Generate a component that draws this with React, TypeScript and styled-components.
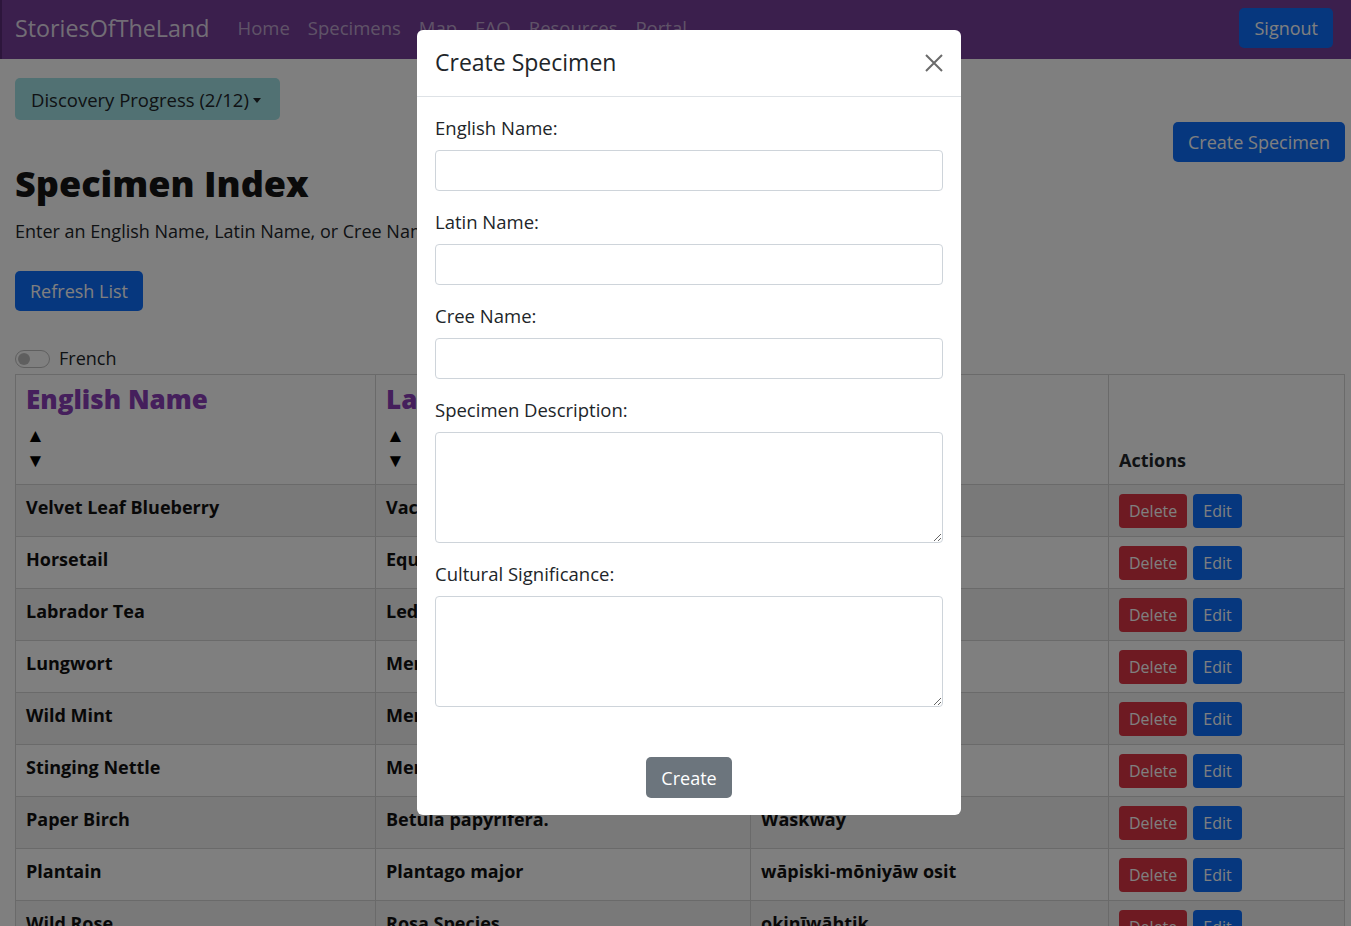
import { FC } from "react"
import styled, { createGlobalStyle, css } from "styled-components"

const GlobalStyle = createGlobalStyle`
  body {
    margin: 0;
    font-family: "Open Sans", "Liberation Sans", sans-serif;
    color: #212529;
    background: #fff;
    overflow: hidden;
  }
  * {
    box-sizing: border-box;
  }
`

const Navbar = styled.nav`
  height: 59px;
  background: #763e9a;
  border-left: 2px solid #5a2d78;
  display: flex;
  align-items: center;
  justify-content: space-between;
  padding: 0 18px 4px 13px;
`

const NavLeft = styled.div`
  display: flex;
  align-items: center;
`

const Brand = styled.span`
  font-size: 23.3px;
  color: rgba(255, 255, 255, 0.82);
  margin-right: 19px;
`

const NavLink = styled.a`
  font-size: 18.5px;
  color: rgba(255, 255, 255, 0.55);
  padding: 0 9px;
  text-decoration: none;
`

const Button = styled.button<{ $variant?: "primary" | "danger" | "info" | "secondary"; $small?: boolean }>`
  border: none;
  border-radius: 5px;
  font-family: inherit;
  font-size: 18px;
  height: 40px;
  padding: 0 15px;
  color: #fff;
  background: #0d6efd;
  cursor: pointer;
  ${(p) => p.$variant === "danger" && css`background: #dc3545;`}
  ${(p) => p.$variant === "secondary" && css`background: #6c757d;`}
  ${(p) =>
    p.$variant === "info" &&
    css`
      background: #a2e2e6;
      color: #212529;
      height: 42px;
      padding: 0 19px 0 16px;
      font-size: 18.5px;
    `}
  ${(p) =>
    p.$small &&
    css`
      font-size: 16px;
      height: 34px;
      padding: 0 10px;
      border-radius: 4px;
    `}
`

const Caret = styled.span`
  display: inline-block;
  margin-left: 4px;
  vertical-align: 4px;
  border-top: 5px solid #212529;
  border-left: 4px solid transparent;
  border-right: 4px solid transparent;
`

const Main = styled.main`
  padding: 19px 6px 0 15px;
`

const TopRow = styled.div`
  display: flex;
  justify-content: flex-end;
  margin-top: 2px;
`

const Title = styled.h1`
  margin: 0;
  font-size: 36px;
  font-weight: 800;
  line-height: 43px;
  color: #141414;
`

const Intro = styled.p`
  margin: 13px 0 26px;
  font-size: 18px;
  line-height: 27px;
`

const SwitchRow = styled.label`
  display: flex;
  align-items: center;
  gap: 9px;
  margin-top: 34px;
  margin-bottom: 2px;
  font-size: 18px;
  line-height: 27px;
`

const Switch = styled.span`
  width: 35px;
  height: 18px;
  border-radius: 9px;
  border: 1px solid rgba(0, 0, 0, 0.25);
  display: flex;
  align-items: center;
  padding-left: 2px;
  &::after {
    content: "";
    width: 12px;
    height: 12px;
    border-radius: 50%;
    background: rgba(0, 0, 0, 0.25);
  }
`

const Table = styled.table`
  width: 100%;
  border-collapse: collapse;
  border: 1px solid #d4d4d4;
`

const Th = styled.th<{ $bottom?: boolean }>`
  text-align: left;
  padding: 9px 10px 11px;
  border: 1px solid #d4d4d4;
  vertical-align: ${(p) => (p.$bottom ? "bottom" : "top")};
  font-size: 18px;
  line-height: 26px;
  font-weight: 700;
`

const SortTitle = styled.div`
  font-size: 26px;
  line-height: 30px;
  font-weight: 800;
  color: #8a3fb8;
`

const Arrows = styled.div`
  margin-top: 9px;
  font-size: 19px;
  line-height: 25px;
  color: #000;
`

const Row = styled.tr<{ $striped: boolean }>`
  background: ${(p) => (p.$striped ? "rgba(0, 0, 0, 0.05)" : "transparent")};
`

const Td = styled.td`
  padding: 9px 10px 8px;
  border: 1px solid #d4d4d4;
  vertical-align: top;
  font-size: 18px;
  line-height: 27px;
  font-weight: 700;
  color: #111;
`

const Actions = styled.div`
  display: flex;
  gap: 6px;
`

const Backdrop = styled.div`
  position: fixed;
  inset: 0;
  background: rgba(0, 0, 0, 0.5);
  display: flex;
  justify-content: center;
  align-items: flex-start;
  padding: 30px 0 0 27px;
`

const ModalBox = styled.div`
  width: 544px;
  background: #fff;
  border-radius: 6px;
`

const ModalHeader = styled.div`
  display: flex;
  align-items: center;
  justify-content: space-between;
  padding: 16px 17px 17px 18px;
  border-bottom: 1px solid #dee2e6;
`

const ModalTitle = styled.h5`
  margin: 0;
  font-size: 23px;
  line-height: 33px;
  font-weight: 400;
`

const CloseButton = styled.button`
  border: none;
  background: none;
  padding: 0;
  display: flex;
  cursor: pointer;
`

const ModalBody = styled.form`
  padding: 17px 18px 17px;
  display: flex;
  flex-direction: column;
`

const FieldLabel = styled.label`
  display: block;
  font-size: 18.5px;
  line-height: 27px;
  margin-bottom: 9px;
`

const fieldBase = css`
  display: block;
  width: 100%;
  border: 1px solid #ced4da;
  border-radius: 4px;
  font-family: inherit;
  font-size: 17px;
  margin-bottom: 17px;
`

const Input = styled.input`
  ${fieldBase}
  height: 41px;
`

const TextArea = styled.textarea`
  ${fieldBase}
  height: 111px;
`

const CreateRow = styled.div`
  display: flex;
  justify-content: center;
  margin-top: 33px;
`

const specimens = [
  ["Velvet Leaf Blueberry", "Vaccinium myrtilloides", "iyinimina"],
  ["Horsetail", "Equisetum arvense", "kâ-kâkiskisiwak"],
  ["Labrador Tea", "Ledum groenlandicum", "maskekopakwa"],
  ["Lungwort", "Mertensia paniculata", "maskihkiy"],
  ["Wild Mint", "Mentha arvensis", "wîkaskwa"],
  ["Stinging Nettle", "Mertensia urtica", "masân"],
  ["Paper Birch", "Betula papyrifera.", "Waskway"],
  ["Plantain", "Plantago major", "wāpiski-mōniyāw osit"],
  ["Wild Rose", "Rosa Species", "okinīwāhtik"],
]

const fields = [
  { label: "English Name:", area: false },
  { label: "Latin Name:", area: false },
  { label: "Cree Name:", area: false },
  { label: "Specimen Description:", area: true },
  { label: "Cultural Significance:", area: true },
]

const CreateModal: FC = () => (
  <Backdrop>
    <ModalBox>
      <ModalHeader>
        <ModalTitle>Create Specimen</ModalTitle>
        <CloseButton aria-label="Close">
          <svg width="20" height="20" viewBox="0 0 20 20">
            <path d="M2 2 L18 18 M18 2 L2 18" stroke="#6b6b6b" strokeWidth="2" />
          </svg>
        </CloseButton>
      </ModalHeader>
      <ModalBody onSubmit={(e) => e.preventDefault()}>
        {fields.map((f) => (
          <div key={f.label}>
            <FieldLabel>{f.label}</FieldLabel>
            {f.area ? <TextArea /> : <Input type="text" />}
          </div>
        ))}
        <CreateRow>
          <Button $variant="secondary" type="submit" style={{ height: 41, padding: "0 15px" }}>
            Create
          </Button>
        </CreateRow>
      </ModalBody>
    </ModalBox>
  </Backdrop>
)

export default function App() {
  return (
    <>
      <GlobalStyle />
      <Navbar>
        <NavLeft>
          <Brand>StoriesOfTheLand</Brand>
          <NavLink>Home</NavLink>
          <NavLink>Specimens</NavLink>
          <NavLink>Map</NavLink>
          <NavLink>FAQ</NavLink>
          <NavLink>Resources</NavLink>
          <NavLink>Portal</NavLink>
        </NavLeft>
        <Button>Signout</Button>
      </Navbar>
      <Main>
        <Button $variant="info">
          Discovery Progress (2/12)
          <Caret />
        </Button>
        <TopRow>
          <Button>Create Specimen</Button>
        </TopRow>
        <Title>Specimen Index</Title>
        <Intro>Enter an English Name, Latin Name, or Cree Name to search the specimen list.</Intro>
        <Button>Refresh List</Button>
        <SwitchRow>
          <Switch />
          French
        </SwitchRow>
        <Table>
          <thead>
            <tr>
              <Th style={{ width: 360 }}>
                <SortTitle>English Name</SortTitle>
                <Arrows>
                  ▲<br />▼
                </Arrows>
              </Th>
              <Th style={{ width: 375 }}>
                <SortTitle>Latin Name</SortTitle>
                <Arrows>
                  ▲<br />▼
                </Arrows>
              </Th>
              <Th style={{ width: 358 }}>
                <SortTitle>Cree Name</SortTitle>
                <Arrows>
                  ▲<br />▼
                </Arrows>
              </Th>
              <Th $bottom>Actions</Th>
            </tr>
          </thead>
          <tbody>
            {specimens.map(([en, la, cr], i) => (
              <Row key={en} $striped={i % 2 === 0}>
                <Td>{en}</Td>
                <Td>{la}</Td>
                <Td>{cr}</Td>
                <Td>
                  <Actions>
                    <Button $variant="danger" $small>
                      Delete
                    </Button>
                    <Button $small>Edit</Button>
                  </Actions>
                </Td>
              </Row>
            ))}
          </tbody>
        </Table>
      </Main>
      <CreateModal />
    </>
  )
}
